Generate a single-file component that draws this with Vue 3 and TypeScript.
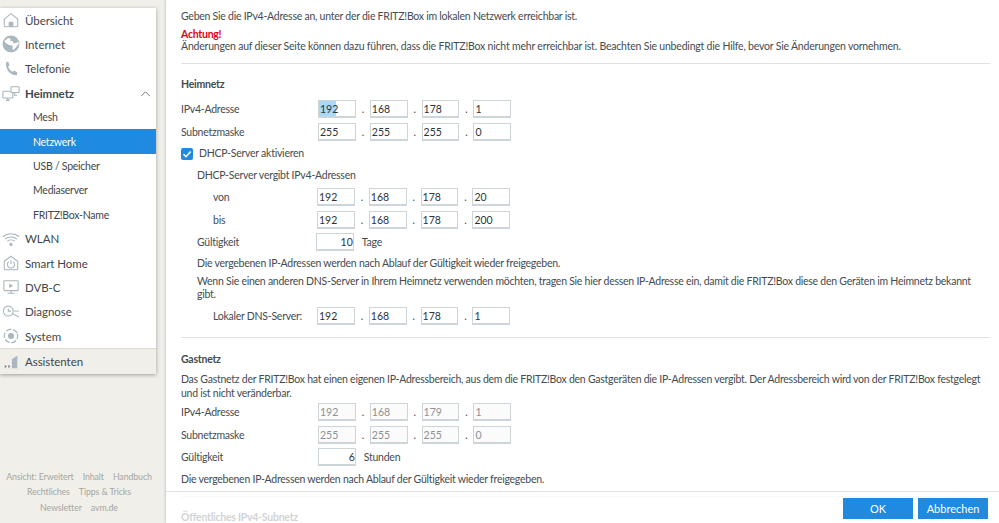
<script setup lang="ts">
interface NavItem {
  label: string
  icon?: string
  sub?: boolean
  active?: boolean
  open?: boolean
}

const navItems: NavItem[] = [
  { label: 'Übersicht', icon: 'home' },
  { label: 'Internet', icon: 'globe' },
  { label: 'Telefonie', icon: 'phone' },
  { label: 'Heimnetz', icon: 'net', open: true },
  { label: 'Mesh', sub: true },
  { label: 'Netzwerk', sub: true, active: true },
  { label: 'USB / Speicher', sub: true },
  { label: 'Mediaserver', sub: true },
  { label: 'FRITZ!Box-Name', sub: true },
  { label: 'WLAN', icon: 'wifi' },
  { label: 'Smart Home', icon: 'smart' },
  { label: 'DVB-C', icon: 'tv' },
  { label: 'Diagnose', icon: 'diag' },
  { label: 'System', icon: 'system' },
]

const footerLinks = [
  ['Ansicht: Erweitert', 'Inhalt', 'Handbuch'],
  ['Rechtliches', 'Tipps & Tricks'],
  ['Newsletter', 'avm.de'],
]
</script>

<template>
  <div class="page">
    <aside class="side">
      <nav class="menu">
        <div
          v-for="item in navItems"
          :key="item.label"
          class="menu-item"
          :class="{ sub: item.sub, active: item.active, open: item.open }"
        >
          <svg v-if="item.icon" class="menu-icon" viewBox="0 0 20 20" fill="none" stroke="#aab7be" stroke-width="1.2">
            <template v-if="item.icon === 'home'">
              <path d="M2.500 9 10 3l7.500 6v7a1.500 1.500 0 0 1-1.500 1.500H4A1.500 1.500 0 0 1 2.500 16z" />
              <path d="M8 17.500V12.500h4v5" fill="#aab7be" />
            </template>
            <template v-else-if="item.icon === 'globe'">
              <circle cx="10" cy="10" r="8.800" fill="#aab7be" stroke="#aab7be" />
              <path d="M2.500 7l4-3.500 3 .5-.5 2.500 3 .5 1 2.500 3.500-1 1.500-1.500.5 3-3 3.500-2.500 3-1.500-.5.5-4-4-1-3-1.500z" fill="#fff" stroke="none" />
            </template>
            <template v-else-if="item.icon === 'phone'">
              <path d="M4.500 2.500 7 2l1.300 4-1.500 1.500c.8 2.500 2.800 4.600 5.200 5.500l1.500-1.200L17 14l-.5 3c-7 .5-13-6.500-12-14.500z" fill="#aab7be" stroke="none" />
            </template>
            <template v-else-if="item.icon === 'net'">
              <rect x="1" y="8" width="11" height="7.500" rx=".5" />
              <path d="M4.500 18h4M6.500 15.500V18" stroke-width="1.500" />
              <rect x="10" y="3" width="9" height="6.500" rx=".5" fill="#fff" />
              <path d="M14 9.500v3h3" />
            </template>
            <template v-else-if="item.icon === 'wifi'">
              <path d="M1 7.500c5-4.500 13-4.500 18 0M3.500 10c3.500-3 9.500-3 13 0M6 12.500c2.200-1.800 5.800-1.800 8 0" />
              <circle cx="10" cy="16" r="1.800" fill="#aab7be" stroke="none" />
            </template>
            <template v-else-if="item.icon === 'smart'">
              <path d="M2.500 8 10 2.500 17.500 8v8.500a1 1 0 0 1-1 1h-13a1 1 0 0 1-1-1z" />
              <path d="M7.500 8.500a4 4 0 1 0 5 0M10 7v4" />
            </template>
            <template v-else-if="item.icon === 'tv'">
              <rect x="2" y="3" width="16" height="11" rx="1" />
              <path d="M8 6v5l4.500-2.500z" fill="#aab7be" stroke="none" />
              <path d="M6 17h8M10 14v3" />
            </template>
            <template v-else-if="item.icon === 'diag'">
              <circle cx="7" cy="9" r="5.500" />
              <path d="M7 6v3h3M11.500 12l7.500 3.500" />
              <path d="M13 9h6" stroke-width="1" />
            </template>
            <template v-else-if="item.icon === 'system'">
              <circle cx="10" cy="10" r="7.500" stroke-dasharray="6 2" stroke-width="1.400" transform="rotate(-20 10 10)" />
              <circle cx="10" cy="10" r="3.400" fill="#aab7be" stroke="none" />
            </template>
          </svg>
          <span class="menu-label">{{ item.label }}</span>
          <svg v-if="item.open" class="chevron" viewBox="0 0 12 8" fill="none" stroke="#5f686e" stroke-width="1">
            <path d="M1 7 6 2l5 5" />
          </svg>
        </div>
        <div class="menu-item assist">
          <svg class="menu-icon" viewBox="0 0 20 20" fill="#aab7be">
            <path d="M11 7 17 3v14h-6z" />
            <path d="M3 13l2.500 2L3 17zM7 13l2.500 2L7 17z" fill="#7f8b91" />
          </svg>
          <span class="menu-label">Assistenten</span>
        </div>
      </nav>
      <div class="side-links">
        <div v-for="(row, i) in footerLinks" :key="i" class="side-row">
          <span v-for="link in row" :key="link">{{ link }}</span>
        </div>
      </div>
    </aside>

    <main class="panel">
      <div class="content">
        <p class="intro">Geben Sie die IPv4-Adresse an, unter der die FRITZ!Box im lokalen Netzwerk erreichbar ist.</p>
        <p class="warn">Achtung!</p>
        <p class="warn-text">Änderungen auf dieser Seite können dazu führen, dass die FRITZ!Box nicht mehr erreichbar ist. Beachten Sie unbedingt die Hilfe, bevor Sie Änderungen vornehmen.</p>
        <hr class="line first-line" />

        <h2 class="head heim">Heimnetz</h2>
        <div class="ip-row">
          <label>IPv4-Adresse</label>
          <div class="ip">
            <input class="marked" value="192" /><i>.</i><input value="168" /><i>.</i><input value="178" /><i>.</i><input value="1" />
          </div>
        </div>
        <div class="ip-row">
          <label>Subnetzmaske</label>
          <div class="ip">
            <input value="255" /><i>.</i><input value="255" /><i>.</i><input value="255" /><i>.</i><input value="0" />
          </div>
        </div>
        <div class="check">
          <span class="box">
            <svg viewBox="0 0 12 12" fill="none" stroke="#fff" stroke-width="1.600"><path d="M2.500 6.200 5 8.700 9.700 3.500" /></svg>
          </span>
          DHCP-Server aktivieren
        </div>

        <div class="dhcp">
          <p class="dhcp-title">DHCP-Server vergibt IPv4-Adressen</p>
          <div class="ip-row small-gap">
            <label class="indent">von</label>
            <div class="ip">
              <input value="192" /><i>.</i><input value="168" /><i>.</i><input value="178" /><i>.</i><input value="20" />
            </div>
          </div>
          <div class="ip-row">
            <label class="indent">bis</label>
            <div class="ip">
              <input value="192" /><i>.</i><input value="168" /><i>.</i><input value="178" /><i>.</i><input value="200" />
            </div>
          </div>
          <div class="ip-row valid">
            <label>Gültigkeit</label>
            <div class="ip shift">
              <input class="num" value="10" /><span class="unit">Tage</span>
            </div>
          </div>
          <p class="after-valid">Die vergebenen IP-Adressen werden nach Ablauf der Gültigkeit wieder freigegeben.</p>
          <p class="dns-text">Wenn Sie einen anderen DNS-Server in Ihrem Heimnetz verwenden möchten, tragen Sie hier dessen IP-Adresse ein, damit die FRITZ!Box diese den Geräten im Heimnetz bekannt gibt.</p>
          <div class="ip-row dns-row">
            <label class="indent">Lokaler DNS-Server:</label>
            <div class="ip">
              <input value="192" /><i>.</i><input value="168" /><i>.</i><input value="178" /><i>.</i><input value="1" />
            </div>
          </div>
        </div>
        <hr class="line second-line" />

        <h2 class="head gast">Gastnetz</h2>
        <p class="gast-text">Das Gastnetz der FRITZ!Box hat einen eigenen IP-Adressbereich, aus dem die FRITZ!Box den Gastgeräten die IP-Adressen vergibt. Der Adressbereich wird von der FRITZ!Box festgelegt und ist nicht veränderbar.</p>
        <div class="ip-row">
          <label>IPv4-Adresse</label>
          <div class="ip off">
            <input value="192" disabled /><i>.</i><input value="168" disabled /><i>.</i><input value="179" disabled /><i>.</i><input value="1" disabled />
          </div>
        </div>
        <div class="ip-row">
          <label>Subnetzmaske</label>
          <div class="ip off">
            <input value="255" disabled /><i>.</i><input value="255" disabled /><i>.</i><input value="255" disabled /><i>.</i><input value="0" disabled />
          </div>
        </div>
        <div class="ip-row tight">
          <label>Gültigkeit</label>
          <div class="ip">
            <input class="num" value="6" /><span class="unit">Stunden</span>
          </div>
        </div>
        <p class="after-gast">Die vergebenen IP-Adressen werden nach Ablauf der Gültigkeit wieder freigegeben.</p>
        <hr class="line third-line" />
        <h2 class="head next">Öffentliches IPv4-Subnetz</h2>
      </div>

      <footer class="actions">
        <button>OK</button>
        <button>Abbrechen</button>
      </footer>
    </main>
  </div>
</template>

<style scoped>
.page {
  display: flex;
  width: 999px;
  height: 523px;
  overflow: hidden;
  background: #f1efe9;
  font-family: "Lato", "Noto Sans", sans-serif;
  font-size: 10.5px;
  letter-spacing: -0.25px;
  color: #444c50;
}

.side {
  width: 166px;
  flex: none;
  display: flex;
  flex-direction: column;
}

.menu {
  width: 156px;
  margin-top: 8px;
  background: #fff;
  box-shadow: 0 1px 4px rgba(0, 0, 0, 0.35);
}

.menu-item {
  height: 24.3px;
  display: flex;
  align-items: center;
  padding-left: 2px;
  font-size: 11.5px;
  letter-spacing: -0.05px;
  color: #3f474b;
}

.menu-item.open {
  font-weight: 700;
}

.menu-item.sub {
  padding-left: 33px;
  font-size: 10.5px;
  letter-spacing: -0.25px;
}

.menu-item.active {
  background: #2089e0;
  color: #fff;
}

.menu-item.assist {
  background: #f1efe9;
  border-top: 1px solid #dcdad4;
  height: 25px;
}

.menu-icon {
  width: 18px;
  height: 18px;
  margin-right: 5px;
  flex: none;
}

.chevron {
  width: 11px;
  height: 7px;
  margin-left: auto;
  margin-right: 5px;
}

.side-links {
  margin-top: auto;
  padding: 0 0 8px;
  font-size: 8.8px;
  letter-spacing: -0.1px;
  color: #a6a6a0;
  line-height: 15.3px;
}

.side-row {
  display: flex;
  justify-content: center;
  gap: 9px;
  padding-right: 8px;
  white-space: nowrap;
}

.panel {
  position: relative;
  flex: 1;
  min-width: 0;
  background: #fff;
  box-shadow: -1px 0 2px rgba(0, 0, 0, 0.15);
  overflow: hidden;
}

.content {
  padding: 10px 9px 0 15px;
  line-height: 13px;
}

p {
  margin: 0;
}

.intro {
  margin-bottom: 2px;
}

.warn {
  color: #e2001a;
  font-weight: 700;
  margin-top: 5px;
}

.warn-text {
  letter-spacing: -0.2px;
  margin-top: -1px;
}

.line {
  border: none;
  border-top: 1px solid #dfe1e2;
  margin: 0;
}

.first-line {
  margin-top: 10px;
}

.second-line {
  margin-top: 12px;
}

.third-line {
  margin-top: 10px;
  border-color: #eef0f1;
}

.head {
  margin: 0;
  font-size: 10.5px;
  font-weight: 700;
  color: #444c50;
  line-height: 13px;
}

.heim {
  margin-top: 14px;
  margin-bottom: 9px;
}

.gast {
  margin-top: 15px;
  margin-bottom: 6px;
}

.next {
  margin-top: 14px;
  color: #8a9094;
}

.ip-row {
  display: flex;
  align-items: center;
  height: 18px;
  margin-bottom: 5px;
}

.ip-row label {
  width: 137px;
  flex: none;
}

.ip-row.small-gap {
  margin-top: 6px;
}

.ip-row.valid {
  margin-top: -1px;
  margin-bottom: 6px;
}

.ip-row.tight {
  margin-bottom: 7px;
  margin-top: -1px;
}

.ip {
  display: flex;
  align-items: center;
}

.ip i {
  width: 14px;
  text-align: center;
  font-style: normal;
}

.ip input {
  box-sizing: border-box;
  width: 37.8px;
  height: 18px;
  padding: 0 0 0 1px;
  border: 1px solid #ced5d9;
  border-bottom-width: 2px;
  border-radius: 0;
  background: #fff;
  font: inherit;
  letter-spacing: 0;
  color: #2d3337;
  outline: none;
}

.ip input.marked {
  background: linear-gradient(#a9d8f8, #a9d8f8) 0 0 / 17px 100% no-repeat #fff;
}

.off input {
  color: #8b9296;
  background: #fbfbfb;
}

.ip input.num {
  text-align: right;
  padding-right: 0;
}

.unit {
  margin-left: 8px;
}

.check {
  display: flex;
  align-items: center;
  height: 13px;
  gap: 6px;
  margin-top: 6px;
}

.box {
  width: 12px;
  height: 12px;
  background: #2089e0;
  border-radius: 2px;
  display: flex;
}

.dhcp {
  padding-left: 16px;
}

.dhcp label {
  width: 120px;
}

.dhcp-title {
  margin-top: 9px;
}

.indent {
  padding-left: 16px;
  box-sizing: border-box;
}

.shift {
  margin-left: -1px;
}

.dns-text {
  margin-top: 5px;
}

.dns-row {
  margin-top: 6px;
  margin-bottom: 0;
}

.gast-text {
  line-height: 14px;
  margin-bottom: 3px;
}

.actions {
  position: absolute;
  left: 0;
  right: 0;
  bottom: 0;
  box-sizing: border-box;
  height: 32px;
  border-top: 1px solid #dfe1e2;
  background: rgba(255, 255, 255, 0.6);
  display: flex;
  justify-content: flex-end;
  align-items: flex-start;
  gap: 5px;
  padding: 6px 11px 0 0;
}

.actions button {
  width: 70px;
  height: 21px;
  padding: 0;
  border: none;
  background: #2089e0;
  color: #fff;
  font: inherit;
  font-size: 11px;
  letter-spacing: 0;
}
</style>

<style>
html,
body {
  margin: 0;
  overflow: hidden;
}
</style>
